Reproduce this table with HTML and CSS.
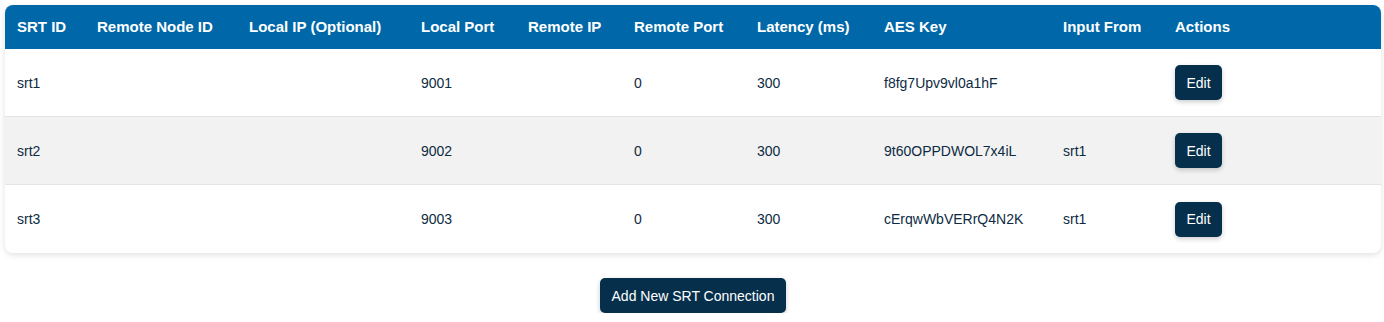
FILE: index.html
```html
<!DOCTYPE html>
<html lang="en">
<head>
<meta charset="UTF-8">
<meta name="viewport" content="width=device-width, initial-scale=1.0">
<title>SRT Connections</title>
<link rel="stylesheet" href="styles.css">
</head>
<body>
    <div class="page">
        <table class="srt-table">
            <thead>
                <tr>
                    <th class="col-1">SRT ID</th>
                    <th class="col-2">Remote Node ID</th>
                    <th class="col-3">Local IP (Optional)</th>
                    <th class="col-4">Local Port</th>
                    <th class="col-5">Remote IP</th>
                    <th class="col-6">Remote Port</th>
                    <th class="col-7">Latency (ms)</th>
                    <th class="col-8">AES Key</th>
                    <th class="col-9">Input From</th>
                    <th class="col-10">Actions</th>
                </tr>
            </thead>
            <tbody>
                <tr>
                    <td>srt1</td>
                    <td></td>
                    <td></td>
                    <td>9001</td>
                    <td></td>
                    <td>0</td>
                    <td>300</td>
                    <td>f8fg7Upv9vl0a1hF</td>
                    <td></td>
                    <td><button class="edit-button">Edit</button></td>
                </tr>
                <tr>
                    <td>srt2</td>
                    <td></td>
                    <td></td>
                    <td>9002</td>
                    <td></td>
                    <td>0</td>
                    <td>300</td>
                    <td>9t60OPPDWOL7x4iL</td>
                    <td>srt1</td>
                    <td><button class="edit-button">Edit</button></td>
                </tr>
                <tr>
                    <td>srt3</td>
                    <td></td>
                    <td></td>
                    <td>9003</td>
                    <td></td>
                    <td>0</td>
                    <td>300</td>
                    <td>cErqwWbVERrQ4N2K</td>
                    <td>srt1</td>
                    <td><button class="edit-button">Edit</button></td>
                </tr>
            </tbody>
        </table>

        <div class="add-row">
            <button class="add-button">Add New SRT Connection</button>
        </div>
    </div>
</body>
</html>
```

FILE: styles.css
```css
body {
    font-family: 'Liberation Sans', Arial, sans-serif;
    margin: 0;
    padding: 0;
    background-color: #fff;
    color: #0d2b42;
}

.page {
    padding: 5px 3px 0 5px;
}

.srt-table {
    width: 100%;
    border-collapse: separate;
    border-spacing: 0;
    border-radius: 8px;
    overflow: hidden;
    box-shadow: 0px 2px 6px rgba(0, 0, 0, 0.12);
    table-layout: fixed;
}

th, td {
    text-align: left;
    font-size: 14px;
    line-height: 16px;
    padding: 0 12px;
}

th {
    background-color: #0068a8;
    color: #fff;
    font-size: 15px;
    font-weight: bold;
    height: 44px;
}

td {
    height: 67px;
    border-bottom: 1px solid #e4e4e4;
    vertical-align: middle;
}

tbody tr:last-child td {
    border-bottom: none;
    height: 68px;
}

tbody tr:nth-child(even) {
    background-color: #f2f2f2;
}

/* column widths, padding not included */
.col-1{width: 56px;}
.col-2{width: 128px;}
.col-3{width: 148px;}
.col-4{width: 83px;}
.col-5{width: 82px;}
.col-6{width: 99px;}
.col-7{width: 103px;}
.col-8{width: 155px;}
.col-9{width: 88px;}
.col-10{width: auto;}

button {
    font-family: 'Liberation Sans', Arial, sans-serif;
    font-size: 14px;
    color: #fff;
    background-color: #062f4c;
    border: none;
    border-radius: 5px;
    height: 35px;
    cursor: pointer;
    box-shadow: 0px 2px 5px rgba(0, 0, 0, 0.2);
}

.edit-button {
    width: 47px;
    padding: 0;
}

.add-row {
    display: flex;
    justify-content: center;
    margin-top: 25px;
}

.add-button {
    width: 186px;
    padding: 0;
}
```
